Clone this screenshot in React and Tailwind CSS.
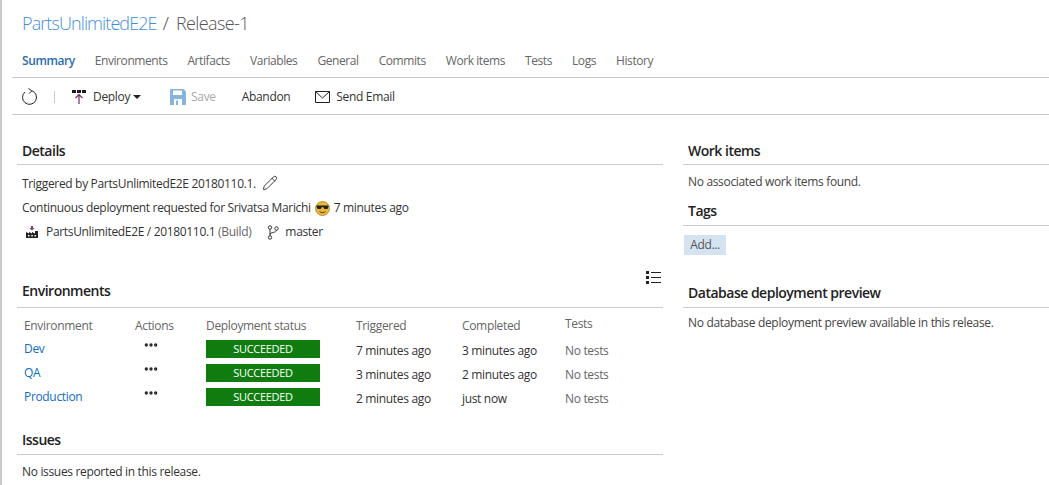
import { MoreHorizontal, Pencil } from "lucide-react";

const tabs = ["Environments", "Artifacts", "Variables", "General", "Commits", "Work items", "Tests", "Logs", "History"];

const envRows = [
  { name: "Dev", triggered: "7 minutes ago", completed: "3 minutes ago" },
  { name: "QA", triggered: "3 minutes ago", completed: "2 minutes ago" },
  { name: "Production", triggered: "2 minutes ago", completed: "just now" },
];

function SectionTitle({ children, className = "", pad = "pb-[5px]" }) {
  return (
    <div className={`border-b border-[#cccccc] pl-[5px] text-[14px] leading-[19px] font-semibold tracking-[-0.5px] text-[#222222] ${pad} ${className}`}>
      {children}
    </div>
  );
}

function CoolEmoji() {
  return (
    <svg width="15" height="15" viewBox="0 0 15 15" className="mx-[4px] shrink-0">
      <circle cx="7.5" cy="7.5" r="7" fill="#e8b73c" stroke="#a8811f" strokeWidth="0.8" />
      <path d="M1.5 4.5h12v1.2l-1 2.3h-3.2l-1.3-2h-1l-1.3 2H2.500l-1-2.300z" fill="#222222" />
      <path d="M4.500 10.500c1.500 1.500 4.500 1.500 6 0" fill="none" stroke="#5b4410" strokeWidth="1" />
    </svg>
  );
}

function RefreshIcon() {
  return (
    <svg width="16" height="17" viewBox="0 0 16 17" fill="none" stroke="#222222" strokeWidth="1">
      <path d="M10 2.800A7 7 0 1 1 3 4" />
      <path d="M6.500 0.500 9.800 2.800 7.200 5.500" />
    </svg>
  );
}

function DeployIcon() {
  return (
    <svg width="16" height="15" viewBox="0 0 16 15">
      <path d="M1 1h4v3H1zM6 1h4v3H6zM11 1h4v3h-4z" fill="#1a1a1a" />
      <path d="M8 15V6M4.500 9 8 5.500 11.500 9" fill="none" stroke="#6b2d6b" strokeWidth="1.200" />
    </svg>
  );
}

function SaveIcon() {
  return (
    <svg width="16" height="16" viewBox="0 0 16 16">
      <path d="M0 0h13.500L16 2.500V16H0z" fill="#86b4dc" />
      <path d="M3 1.500h9v4.500H3z" fill="#ffffff" />
      <path d="M4 10h8v6H4z" fill="#ffffff" />
      <path d="M6 11.500h2v4.500H6z" fill="#86b4dc" />
    </svg>
  );
}

function MailIcon() {
  return (
    <svg width="15" height="12" viewBox="0 0 15 12" fill="none" stroke="#222222" strokeWidth="1">
      <path d="M.5.500h14v11H.5z" />
      <path d="M.5.500 7.500 7l7-6.500" />
    </svg>
  );
}

function BuildIcon() {
  return (
    <svg width="14" height="14" viewBox="0 0 14 14">
      <path d="M1 13V7l3 1.500V7l3 1.500V7l3 1.500V6h3v7z" fill="#222222" />
      <path d="M6 1h2v2h1.500L7 5.500 4.500 3H6z" fill="#7a3b8f" />
      <path d="M3 10h1.500v1.500H3zM6.300 10h1.500v1.500H6.300zM9.500 10H11v1.500H9.500z" fill="#ffffff" />
    </svg>
  );
}

function BranchIcon() {
  return (
    <svg width="12" height="15" viewBox="0 0 12 15" fill="none" stroke="#333333" strokeWidth="1">
      <circle cx="3" cy="2.500" r="1.700" />
      <circle cx="9.500" cy="3.500" r="1.700" />
      <circle cx="3" cy="12.500" r="1.700" />
      <path d="M3 4.200v6.600M3 9.500c0-2.500 6.500-1.500 6.500-4.300" />
    </svg>
  );
}

function ListIcon() {
  return (
    <svg width="15" height="13" viewBox="0 0 15 13">
      <path d="M0 0h3v3H0zM0 5h3v3H0zM0 10h3v3H0z" fill="#222222" />
      <path d="M5 1.500h10M5 6.500h10M5 11.500h10" stroke="#222222" strokeWidth="1" />
    </svg>
  );
}

export default function App() {
  return (
    <div className="h-[485px] w-[1049px] overflow-hidden bg-white text-[12px] leading-[16px] text-[#333333] font-['Open_Sans','Noto_Sans',sans-serif] tracking-[-0.33px]">
      <div className="h-full border-l-2 border-[#cccccc] pl-[10px]">
        <div className="pt-[11px] pl-[10px] text-[18px] leading-[24px] tracking-[-0.9px] font-light">
          <span className="text-[#3f8fd9]">PartsUnlimitedE2E</span>
          <span className="ml-[6px] mr-[8px] text-[#444444]">/</span>
          <span className="text-[#555555] tracking-[-0.6px]">Release-1</span>
        </div>

        <div className="mt-[14px] flex h-[29px] gap-[20px] border-b border-[#cccccc] pl-[10px] pt-[4px] tracking-[-0.42px]">
          <span className="font-semibold text-[#2b6cb0]">Summary</span>
          {tabs.map((t) => (
            <span key={t} className="text-[#666666]">{t}</span>
          ))}
        </div>

        <div className="flex h-[37px] items-center border-b border-[#cccccc] pl-[10px] pt-[1px]">
          <RefreshIcon />
          <span className="ml-[16px] mr-[16px] h-[12px] border-l border-[#cccccc]" />
          <DeployIcon />
          <span className="ml-[6px] text-[#333333]">Deploy</span>
          <span className="ml-[3px] border-x-[4px] border-t-[4px] border-x-transparent border-t-[#222222]" />
          <span className="ml-[29px]"><SaveIcon /></span>
          <span className="ml-[5px] text-[#aaaaaa]">Save</span>
          <span className="ml-[26px]">Abandon</span>
          <span className="ml-[25px]"><MailIcon /></span>
          <span className="ml-[6px]">Send Email</span>
        </div>

        <div className="flex">
          <div className="w-[646px] ml-[5px] shrink-0">
            <SectionTitle className="mt-[26px]" pad="pb-[4px]">Details</SectionTitle>
            <div className="pl-[5px]">
              <div className="mt-[11px] flex items-center">
                Triggered by PartsUnlimitedE2E 20180110.1.
                <Pencil size={16} strokeWidth={1.300} className="ml-[6px] -mt-[2px] text-[#222222]" />
              </div>
              <div className="mt-[8px] flex items-center">
                Continuous deployment requested for Srivatsa Marichi
                <CoolEmoji />
                7 minutes ago
              </div>
              <div className="mt-[8px] flex items-center pl-[3px]">
                <BuildIcon />
                <span className="ml-[7px]">PartsUnlimitedE2E / 20180110.1 <span className="text-[#666666]">(Build)</span></span>
                <span className="ml-[16px]"><BranchIcon /></span>
                <span className="ml-[6px]">master</span>
              </div>
            </div>

            <div className="relative">
              <SectionTitle className="mt-[41px]" pad="pb-[7px]">Environments</SectionTitle>
              <div className="absolute right-[2px] top-[-10px]"><ListIcon /></div>
            </div>

            <div className="mt-[10px] grid grid-cols-[111px_71px_150px_106px_103px_1fr] pl-[7px] text-[#666666]">
              <span>Environment</span>
              <span>Actions</span>
              <span>Deployment status</span>
              <span>Triggered</span>
              <span>Completed</span>
              <span className="-mt-[2px]">Tests</span>
            </div>
            <div className="mt-[3px] pl-[7px]">
              {envRows.map((row) => (
                <div key={row.name} className="grid h-[24px] grid-cols-[111px_71px_150px_106px_103px_1fr] items-center">
                  <span className="text-[#106ebe]">{row.name}</span>
                  <span className="pl-[8px] -mt-[8px]"><MoreHorizontal size={16} strokeWidth={3} className="text-[#222222]" /></span>
                  <span className="-mt-[1px] flex h-[18px] w-[114px] items-center justify-center bg-[#107c10] text-[11px] text-white tracking-[-0.3px]">SUCCEEDED</span>
                  <span className="mt-[3px] text-[#333333]">{row.triggered}</span>
                  <span className="mt-[3px] text-[#333333]">{row.completed}</span>
                  <span className="mt-[3px] text-[#666666]">No tests</span>
                </div>
              ))}
            </div>

            <SectionTitle className="mt-[21px]">Issues</SectionTitle>
            <div className="mt-[9px] pl-[5px]">No issues reported in this release.</div>
          </div>

          <div className="ml-[20px] flex-1">
            <SectionTitle className="mt-[26px]" pad="pb-[4px]">Work items</SectionTitle>
            <div className="mt-[9px] pl-[5px] text-[#444444]">No associated work items found.</div>
            <SectionTitle className="mt-[11px]">Tags</SectionTitle>
            <div className="mt-[9px] ml-[1px] flex h-[20px] w-[42px] items-center justify-center bg-[#d5e3f0] text-[#555555]">Add...</div>
            <SectionTitle className="mt-[28px]">Database deployment preview</SectionTitle>
            <div className="mt-[7px] pl-[5px] text-[#444444]">No database deployment preview available in this release.</div>
          </div>
        </div>
      </div>
    </div>
  );
}
